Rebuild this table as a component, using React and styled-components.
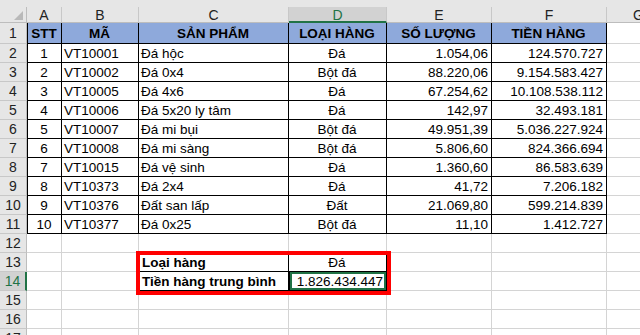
import styled, { createGlobalStyle, css } from "styled-components";

const GlobalStyle = createGlobalStyle`
  html, body {
    margin: 0;
    padding: 0;
    background: #ffffff;
    overflow: hidden;
  }
  body {
    font-family: "Liberation Sans", Arial, sans-serif;
  }
`;

const COLS = ["A", "B", "C", "D", "E", "F", "G"];
const colWidths = "27px 35px 77px 150px 98px 105px 115px 64px";
const GRID = "#d4d4d4";
const LINE = "#000000";

const rows = [
  ["1", "VT10001", "Đá hộc", "Đá", "1.054,06", "124.570.727"],
  ["2", "VT10002", "Đá 0x4", "Bột đá", "88.220,06", "9.154.583.427"],
  ["3", "VT10005", "Đá 4x6", "Đá", "67.254,62", "10.108.538.112"],
  ["4", "VT10006", "Đá 5x20 ly tâm", "Đá", "142,97", "32.493.181"],
  ["5", "VT10007", "Đá mi bụi", "Bột đá", "49.951,39", "5.036.227.924"],
  ["6", "VT10008", "Đá mi sàng", "Bột đá", "5.806,60", "824.366.694"],
  ["7", "VT10015", "Đá vệ sinh", "Đá", "1.360,60", "86.583.639"],
  ["8", "VT10373", "Đá 2x4", "Đá", "41,72", "7.206.182"],
  ["9", "VT10376", "Đất san lấp", "Đất", "21.069,80", "599.214.839"],
  ["10", "VT10377", "Đá 0x25", "Bột đá", "11,10", "1.412.727"],
];

const headers = ["STT", "MÃ", "SẢN PHẨM", "LOẠI HÀNG", "SỐ LƯỢNG", "TIỀN HÀNG"];
const aligns = ["center", "left", "left", "center", "right", "right"];

const Wrap = styled.div`
  position: relative;
  width: 640px;
  height: 335px;
  overflow: hidden;
`;

const Sheet = styled.div`
  display: grid;
  grid-template-columns: ${colWidths};
  grid-template-rows: 7px 16px 21px repeat(16, 19px);
  width: 671px;
`;

const TopStrip = styled.div`
  grid-column: 1 / -1;
  background: #e6e6e6;
`;

const Corner = styled.div`
  position: relative;
  background: #e6e6e6;
  border-right: 1px solid #bdbdbd;
  border-bottom: 1px solid #bdbdbd;
  box-sizing: border-box;
  &::after {
    content: "";
    position: absolute;
    right: 3px;
    bottom: 2px;
    width: 0;
    height: 0;
    border-left: 9px solid transparent;
    border-bottom: 9px solid #b9b9b9;
  }
`;

const ColHead = styled.div`
  box-sizing: border-box;
  display: flex;
  align-items: center;
  justify-content: center;
  font-size: 14px;
  line-height: 1;
  color: ${(p) => (p.$active ? "#217346" : "#222222")};
  background: ${(p) => (p.$active ? "#d2d2d2" : "#e6e6e6")};
  border-right: 1px solid #c8c8c8;
  border-bottom: ${(p) => (p.$active ? "2px solid #217346" : "1px solid #bdbdbd")};
  padding-top: ${(p) => (p.$active ? "1px" : "0")};
`;

const RowHead = styled.div`
  box-sizing: border-box;
  display: flex;
  align-items: center;
  justify-content: center;
  font-size: 14px;
  color: ${(p) => (p.$active ? "#217346" : "#222222")};
  background: ${(p) => (p.$active ? "#d2d2d2" : "#e6e6e6")};
  border-right: ${(p) => (p.$active ? "2px solid #217346" : "1px solid #bdbdbd")};
  border-bottom: 1px solid #c8c8c8;
`;

const Cell = styled.div`
  box-sizing: border-box;
  display: flex;
  align-items: center;
  justify-content: ${(p) =>
    p.$align === "right" ? "flex-end" : p.$align === "center" ? "center" : "flex-start"};
  padding: 0 3px 0 2px;
  font-size: 13.5px;
  font-weight: ${(p) => (p.$bold ? 700 : 400)};
  color: #000000;
  white-space: nowrap;
  overflow: hidden;
  background: ${(p) => p.$fill || "#ffffff"};
  border-right: 1px solid ${(p) => (p.$boxed ? LINE : GRID)};
  border-bottom: 1px solid ${(p) => (p.$boxed ? LINE : GRID)};
  ${(p) =>
    p.$leftLine &&
    css`
      border-left: 1px solid ${LINE};
    `}
  ${(p) =>
    p.$topLine &&
    css`
      border-top: 1px solid ${LINE};
    `}
  ${(p) =>
    p.$selected &&
    css`
      box-shadow: inset 0 0 0 2px #217346;
      border-left: 1px solid ${LINE};
    `}
`;

const Highlight = styled.div`
  position: absolute;
  left: 136px;
  top: 251px;
  width: 255px;
  height: 44px;
  box-sizing: border-box;
  border: 4px solid #ff0000;
  pointer-events: none;
`;

function BlankRow({ n }) {
  return (
    <>
      <RowHead>{n}</RowHead>
      {COLS.map((c) => (
        <Cell key={c} />
      ))}
    </>
  );
}

export default function App() {
  return (
    <Wrap>
      <GlobalStyle />
      <Sheet>
        <TopStrip />
        <Corner />
        {COLS.map((c) => (
          <ColHead key={c} $active={c === "D"}>
            {c}
          </ColHead>
        ))}

        <RowHead>1</RowHead>
        {headers.map((h, i) => (
          <Cell key={h} $align="center" $bold $fill="#8ea9db" $boxed $leftLine={i === 0}>
            {h}
          </Cell>
        ))}
        <Cell />

        {rows.map((r, ri) => (
          <Rowset key={r[0]} n={ri + 2} data={r} />
        ))}

        <BlankRow n={12} />

        <RowHead>13</RowHead>
        <Cell />
        <Cell />
        <Cell $bold $boxed $leftLine $topLine>Loại hàng</Cell>
        <Cell $align="center" $boxed $topLine>Đá</Cell>
        <Cell />
        <Cell />
        <Cell />

        <RowHead $active>14</RowHead>
        <Cell />
        <Cell />
        <Cell $bold $boxed $leftLine>Tiền hàng trung bình</Cell>
        <Cell $align="right" $boxed $selected>1.826.434.447</Cell>
        <Cell />
        <Cell />
        <Cell />

        {[15, 16, 17].map((n) => (
          <BlankRow key={n} n={n} />
        ))}
      </Sheet>
      <Highlight />
    </Wrap>
  );
}

function Rowset({ n, data }) {
  return (
    <>
      <RowHead>{n}</RowHead>
      {data.map((v, i) => (
        <Cell key={i} $align={aligns[i]} $boxed $leftLine={i === 0}>
          {v}
        </Cell>
      ))}
      <Cell />
    </>
  );
}
